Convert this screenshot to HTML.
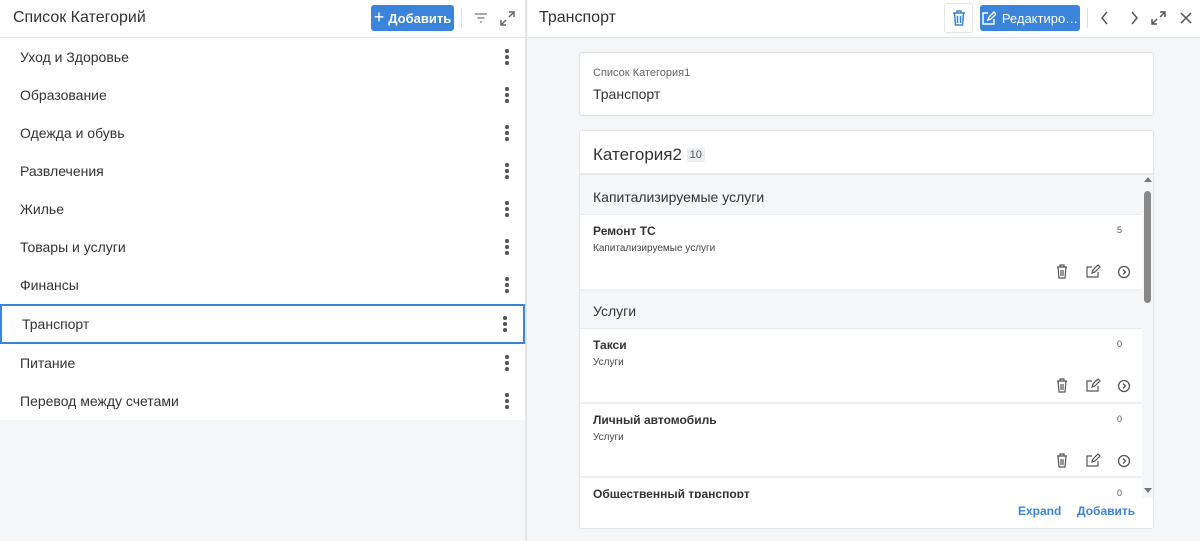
<!DOCTYPE html><html><head><meta charset="utf-8"><style>
*{box-sizing:border-box;margin:0;padding:0}
body{width:1200px;height:541px;overflow:hidden;font-family:"Liberation Sans",sans-serif;color:#222;background:#f5f6f8;position:relative}
.left{position:absolute;left:0;top:0;width:527px;height:541px;background:#f5f6f8;border-right:2px solid #e3e5e8}
.lh{height:38px;background:#fff;border-bottom:1px solid #e3e5e8;position:relative}
.lh .t{position:absolute;left:13px;top:9px;font-size:16px;color:#333}
.btn{position:absolute;background:#3a85db;color:#fff;border-radius:3px;font-size:13px;display:flex;align-items:center;justify-content:center}
.row{height:38px;background:#fff;position:relative;font-size:14px;line-height:38px;padding-left:20px;color:#333}
.dots{position:absolute;right:16px;top:11px;width:4px}
.dots i{display:block;width:3.5px;height:3.5px;border-radius:50%;background:#555;margin-bottom:2.5px}
.sel{border:2px solid #3a85db;height:40px;line-height:36px;padding-left:20px}
.rh{position:absolute;left:528px;top:0;right:0;height:38px;background:#fff;border-bottom:1px solid #e3e5e8}
.card{position:absolute;background:#fff;border:1px solid #e3e5e8;border-radius:3px}
.grp{position:absolute;left:0;width:562px;background:#f5f6f8;font-size:14px;padding-left:13px;color:#333;border-bottom:1px solid #e8e9eb}
.it{position:absolute;left:0;width:562px;background:#fff;border-bottom:2px solid #eef0f2}
.it b{position:absolute;left:13px;top:9px;font-size:12px;color:#333}
.it s{text-decoration:none;position:absolute;left:13px;top:28px;font-size:10px;color:#444}
.it u{text-decoration:none;position:absolute;left:537px;top:10px;font-size:9px;color:#555}
.ic{position:absolute;top:49px}
</style></head><body>
<div class="left">
<div class="lh"><span class="t">Список Категорий</span>
<div class="btn" style="left:371px;top:5px;width:83px;height:26px;font-weight:bold"><span style="font-size:18px;font-weight:normal;margin-right:4px;margin-top:-2px">+</span>Добавить</div>
<div style="position:absolute;left:461px;top:8px;width:1px;height:20px;background:#ddd"></div>
<svg style="position:absolute;left:474px;top:12px" width="14" height="12"><path d="M1 2h12M3.5 6h7M6 10h2" stroke="#777" stroke-width="1.3"/></svg>
<svg style="position:absolute;left:500px;top:11px" width="15" height="15"><path d="M9 1h5v5M14 1L9 6M6 14H1V9M1 14l5-5" stroke="#666" stroke-width="1.5" fill="none"/></svg>
</div>
<div class="row">Уход и Здоровье<div class="dots"><i></i><i></i><i></i></div></div>
<div class="row">Образование<div class="dots"><i></i><i></i><i></i></div></div>
<div class="row">Одежда и обувь<div class="dots"><i></i><i></i><i></i></div></div>
<div class="row">Развлечения<div class="dots"><i></i><i></i><i></i></div></div>
<div class="row">Жилье<div class="dots"><i></i><i></i><i></i></div></div>
<div class="row">Товары и услуги<div class="dots"><i></i><i></i><i></i></div></div>
<div class="row">Финансы<div class="dots"><i></i><i></i><i></i></div></div>
<div class="row sel">Транспорт<div class="dots" style="right:16px;top:10px"><i></i><i></i><i></i></div></div>
<div class="row">Питание<div class="dots"><i></i><i></i><i></i></div></div>
<div class="row">Перевод между счетами<div class="dots"><i></i><i></i><i></i></div></div>
</div>
<div class="rh"><span style="position:absolute;left:11px;top:9px;font-size:16px;color:#333">Транспорт</span>
<div style="position:absolute;left:416px;top:3px;width:29px;height:30px;border:1px solid #e3e5e8;border-radius:3px"></div>
<svg style="position:absolute;left:424px;top:10px" width="14" height="16"><path d="M1 3h12M5 3V1h4v2M2.5 3l1 12h7l1-12M5.5 6v7M8.5 6v7" stroke="#3a85db" stroke-width="1.5" fill="none"/></svg>
<div class="btn" style="left:452px;top:5px;width:100px;height:26px;font-size:13px">
<svg width="14" height="14" style="margin-right:6px"><path d="M12 8v5H1V2h5M6 9l1-3 5-5 2 2-5 5z" stroke="#fff" stroke-width="1.5" fill="none"/></svg>Редактиро…</div>
<div style="position:absolute;left:559px;top:8px;width:1px;height:20px;background:#ddd"></div>
<svg style="position:absolute;left:573px;top:10px" width="120" height="16"><path d="M6 2L1 8l5 6M31 2l5 6-5 6" stroke="#555" stroke-width="1.5" fill="none"/><path d="M59 2h5v5M64 2l-5 5M56 14h-5v-5M51 14l5-5" stroke="#555" stroke-width="1.5" fill="none"/><path d="M80 3l10 10M90 3L80 13" stroke="#555" stroke-width="1.5"/></svg>
</div>
<div class="card" style="left:579px;top:52px;width:575px;height:64px">
<div style="position:absolute;left:13px;top:14px;font-size:11px;color:#666">Список Категория1</div>
<div style="position:absolute;left:13px;top:33px;font-size:14px;color:#333">Транспорт</div></div>
<div class="card" style="left:579px;top:130px;width:575px;height:399px;overflow:hidden">
<div style="position:absolute;left:13px;top:14px;font-size:17px;color:#333">Категория2 <span style="font-size:11px;background:#eceef0;padding:1px 3px;border-radius:2px;vertical-align:2px;color:#555">10</span></div>
<div style="position:absolute;left:0;top:42px;width:575px;border-top:2px solid #e6e8ea;height:325px;overflow:hidden;background:#f5f6f8">
<div class="grp" style="top:0;height:40px;line-height:44px">Капитализируемые услуги</div>
<div class="it" style="top:40px;height:76px"><b>Ремонт ТС</b><s>Капитализируемые услуги</s><u>5</u>
<svg class="ic" style="left:475px" width="80" height="16"><path d="M2 3h10M5 3V1h4v2M3 3l1 11h6l1-11M6 6v6M8 6v6" stroke="#555" stroke-width="1.2" fill="none"/><path d="M43 8v5H32V3h5M37 9l1-3 5-5 2 2-5 5z" stroke="#555" stroke-width="1.2" fill="none"/><circle cx="69" cy="8" r="5.5" stroke="#555" stroke-width="1.3" fill="none"/><path d="M68 5.5l2.5 2.5-2.5 2.5" stroke="#555" stroke-width="1.3" fill="none"/></svg></div>
<div class="grp" style="top:116px;height:38px;line-height:40px">Услуги</div>
<div class="it" style="top:154px;height:75px"><b>Такси</b><s>Услуги</s><u>0</u>
<svg class="ic" style="left:475px" width="80" height="16"><path d="M2 3h10M5 3V1h4v2M3 3l1 11h6l1-11M6 6v6M8 6v6" stroke="#555" stroke-width="1.2" fill="none"/><path d="M43 8v5H32V3h5M37 9l1-3 5-5 2 2-5 5z" stroke="#555" stroke-width="1.2" fill="none"/><circle cx="69" cy="8" r="5.5" stroke="#555" stroke-width="1.3" fill="none"/><path d="M68 5.5l2.5 2.5-2.5 2.5" stroke="#555" stroke-width="1.3" fill="none"/></svg></div>
<div class="it" style="top:229px;height:74px"><b>Личный автомобиль</b><s>Услуги</s><u>0</u>
<svg class="ic" style="left:475px" width="80" height="16"><path d="M2 3h10M5 3V1h4v2M3 3l1 11h6l1-11M6 6v6M8 6v6" stroke="#555" stroke-width="1.2" fill="none"/><path d="M43 8v5H32V3h5M37 9l1-3 5-5 2 2-5 5z" stroke="#555" stroke-width="1.2" fill="none"/><circle cx="69" cy="8" r="5.5" stroke="#555" stroke-width="1.3" fill="none"/><path d="M68 5.5l2.5 2.5-2.5 2.5" stroke="#555" stroke-width="1.3" fill="none"/></svg></div>
<div class="it" style="top:303px;height:74px"><b>Общественный транспорт</b><u>0</u></div>
<div style="position:absolute;left:562px;top:0;width:13px;height:325px;background:#f5f6f8"></div>
<div style="position:absolute;left:564px;top:2px;width:0;height:0;border:4px solid transparent;border-bottom:5px solid #777;border-top:0"></div>
<div style="position:absolute;left:564px;top:16px;width:7px;height:112px;background:#888;border-radius:4px"></div>
<div style="position:absolute;left:564px;top:313px;width:0;height:0;border:4px solid transparent;border-top:5px solid #777;border-bottom:0"></div>
</div>
<div style="position:absolute;left:438px;top:373px;font-size:12px;font-weight:bold;color:#3a85db">Expand</div>
<div style="position:absolute;left:497px;top:373px;font-size:12px;font-weight:bold;color:#3a85db">Добавить</div>
</div>
</body></html>
